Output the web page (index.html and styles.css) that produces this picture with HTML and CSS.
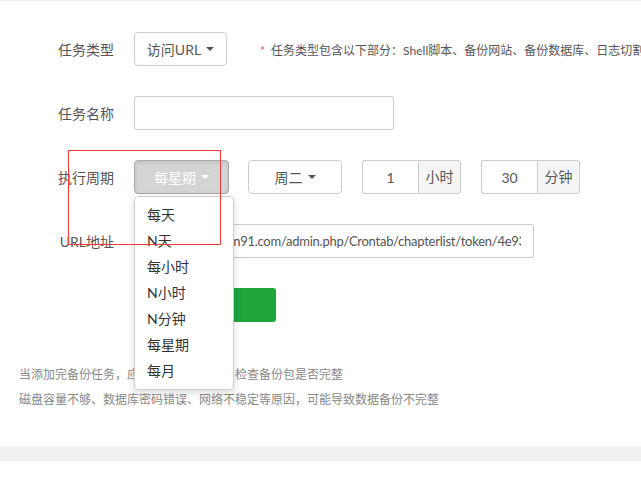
FILE: index.html
```html
<!DOCTYPE html>
<html lang="zh-CN">
<head>
<meta charset="utf-8">
<title>计划任务</title>
<link rel="stylesheet" href="styles.css">
</head>
<body>
<div class="page">
  <form class="form">
    <div class="row">
      <label class="label">任务类型</label>
      <button type="button" class="btn btn-type">访问URL <span class="caret"></span></button>
      <span class="hint"><span class="star">*</span>任务类型包含以下部分：Shell脚本、备份网站、备份数据库、日志切割、释放内存、访问URL</span>
    </div>
    <div class="row">
      <label class="label">任务名称</label>
      <input class="input input-name" type="text" value="">
    </div>
    <div class="row">
      <label class="label">执行周期</label>
      <div class="dropdown">
        <button type="button" class="btn btn-cycle active">每星期 <span class="caret"></span></button>
        <ul class="menu">
          <li>每天</li>
          <li>N天</li>
          <li>每小时</li>
          <li>N小时</li>
          <li>N分钟</li>
          <li>每星期</li>
          <li>每月</li>
        </ul>
      </div>
      <button type="button" class="btn btn-week">周二 <span class="caret"></span></button>
      <div class="group">
        <input class="group-input" type="text" value="1">
        <span class="addon">小时</span>
      </div>
      <div class="group">
        <input class="group-input" type="text" value="30">
        <span class="addon">分钟</span>
      </div>
    </div>
    <div class="row">
      <label class="label">URL地址</label>
      <input class="input input-url" type="text" value="http://ww.admin91.com/admin.php/Crontab/chapterlist/token/4e93c1b8a0d2">
    </div>
    <div class="row">
      <span class="label"></span>
      <button type="button" class="btn-submit">添加任务</button>
    </div>
  </form>
  <div class="notes">
    <p>当添加完备份任务，应手动运行一次，并检查备份包是否完整</p>
    <p>磁盘容量不够、数据库密码错误、网络不稳定等原因，可能导致数据备份不完整</p>
  </div>
  <div class="band"></div>
  <div class="mark"></div>
</div>
</body>
</html>
```
FILE: styles.css
```css
* { box-sizing: border-box; }
html, body { margin: 0; padding: 0; background: #fff; }
body {
  font-family: "Lato", "Noto Sans CJK SC", sans-serif;
  font-size: 14px;
  color: #555;
  overflow: hidden;
  width: 641px;
  height: 479px;
}
.page {
  position: relative;
  border-top: 1px solid #ececec;
  height: 479px;
  overflow: hidden;
}
.form {
  padding-top: 31px;
}
.row {
  display: flex;
  align-items: center;
  height: 34px;
  margin-bottom: 30px;
  white-space: nowrap;
}
.label {
  width: 114px;
  flex: none;
  text-align: right;
  margin-right: 20px;
  color: #555;
  font-size: 14px;
}
.btn {
  height: 34px;
  border: 1px solid #ccc;
  border-radius: 4px;
  background: #fff;
  color: #555;
  font-family: inherit;
  font-size: 14px;
  padding: 0;
  display: flex;
  align-items: center;
  justify-content: center;
  gap: 5px;
  flex: none;
}
.caret {
  display: inline-block;
  width: 0;
  height: 0;
  border-left: 4px solid transparent;
  border-right: 4px solid transparent;
  border-top: 4px solid #555;
}
.btn-type { width: 93px; }
.hint {
  margin-left: 33px;
  font-size: 12px;
  color: #555;
}
.star {
  color: #ff4d4d;
  margin-right: 6px;
}
.input {
  height: 34px;
  border: 1px solid #ccc;
  border-radius: 2px;
  font-family: inherit;
  font-size: 14px;
  color: #555;
  padding: 0 12px;
  outline: none;
  flex: none;
}
.input-name { width: 260px; }
.input-url {
  width: 400px;
  font-size: 13px;
  letter-spacing: -0.25px;
  padding-left: 15px;
}
.dropdown {
  position: relative;
  flex: none;
}
.btn-cycle { width: 95px; }
.btn.active {
  background: #d4d4d4;
  border-color: #a9a9a9;
  color: #fff;
  box-shadow: inset 0 2px 4px rgba(0,0,0,0.08);
}
.btn.active .caret { border-top-color: #fff; }
.menu {
  position: absolute;
  top: 36px;
  left: 0;
  width: 100px;
  margin: 0;
  padding: 5px 0;
  list-style: none;
  background: #fff;
  border: 1px solid #d0d0d0;
  border-radius: 4px;
  box-shadow: 0 3px 8px rgba(0,0,0,0.15);
  z-index: 5;
}
.menu li {
  height: 26px;
  line-height: 26px;
  padding-left: 12px;
  color: #333;
  font-size: 14px;
}
.btn-week {
  width: 94px;
  margin-left: 19px;
}
.group {
  display: flex;
  margin-left: 20px;
  flex: none;
}
.group-input {
  width: 56px;
  height: 34px;
  border: 1px solid #ccc;
  border-right: none;
  border-radius: 3px 0 0 3px;
  text-align: center;
  font-family: inherit;
  font-size: 14px;
  color: #555;
  padding: 0;
  outline: none;
}
.addon {
  width: 43px;
  height: 34px;
  line-height: 32px;
  border: 1px solid #ccc;
  border-radius: 0 3px 3px 0;
  background: #f5f5f5;
  text-align: center;
  font-size: 14px;
  color: #555;
}
.btn-submit {
  width: 142px;
  height: 34px;
  border: none;
  border-radius: 3px;
  background: #20a53a;
  color: #fff;
  font-family: inherit;
  font-size: 14px;
  flex: none;
}
.notes {
  padding-left: 19px;
  margin-top: 40px;
  font-size: 12px;
  color: #888;
  line-height: 25px;
}
.notes p { margin: 0; }
.band {
  margin-top: 34px;
  height: 15px;
  background: #f1f1f1;
}
.mark {
  position: absolute;
  left: 68px;
  top: 149px;
  width: 153px;
  height: 95px;
  border: 1px solid #f03a3a;
  z-index: 6;
  pointer-events: none;
}
```
